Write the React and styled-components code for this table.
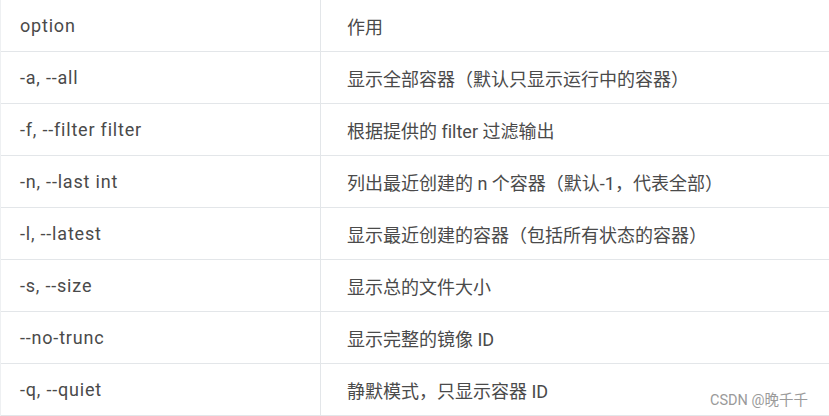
import React from 'react'
import styled, { createGlobalStyle } from 'styled-components'

const GlobalStyle = createGlobalStyle`
  html, body {
    margin: 0;
    padding: 0;
    background: #fff;
  }
  body {
    font-family: Roboto, "Noto Sans CJK SC", sans-serif;
    color: #4a4a4a;
    font-variant-ligatures: none;
    font-feature-settings: "liga" 0, "clig" 0;
  }
`

const Page = styled.div`
  position: relative;
  width: 829px;
  height: 416px;
  overflow: hidden;
  background: #fff;
`

const Table = styled.div`
  display: grid;
  grid-template-columns: 319px 1fr;
  border-left: 1px solid #eef0f2;
`

const Cell = styled.div`
  height: 51px;
  display: flex;
  align-items: center;
  box-sizing: content-box;
  border-bottom: 1px solid #e3e6e9;
  padding-left: ${p => (p.$right ? '26px' : '19px')};
  border-left: ${p => (p.$right ? '1px solid #e3e6e9' : 'none')};
  font-size: 18px;
  letter-spacing: ${p => (p.$right ? '0' : '0.8px')};
  white-space: nowrap;
`

const Watermark = styled.div`
  position: absolute;
  right: 21px;
  bottom: 7px;
  font-family: Roboto, "Noto Sans CJK SC", sans-serif;
  font-size: 14.5px;
  color: #9a9a9a;
`

const rows = [
  ['option', '作用'],
  ['-a, --all', '显示全部容器（默认只显示运行中的容器）'],
  ['-f, --filter filter', '根据提供的 filter 过滤输出'],
  ['-n, --last int', '列出最近创建的 n 个容器（默认-1，代表全部）'],
  ['-l, --latest', '显示最近创建的容器（包括所有状态的容器）'],
  ['-s, --size', '显示总的文件大小'],
  ['--no-trunc', '显示完整的镜像 ID'],
  ['-q, --quiet', '静默模式，只显示容器 ID'],
]

export default function App() {
  return (
    <Page>
      <GlobalStyle />
      <Table>
        {rows.map(([opt, desc]) => (
          <React.Fragment key={opt}>
            <Cell>{opt}</Cell>
            <Cell $right>{desc}</Cell>
          </React.Fragment>
        ))}
      </Table>
      <Watermark>CSDN @晚千千</Watermark>
    </Page>
  )
}
